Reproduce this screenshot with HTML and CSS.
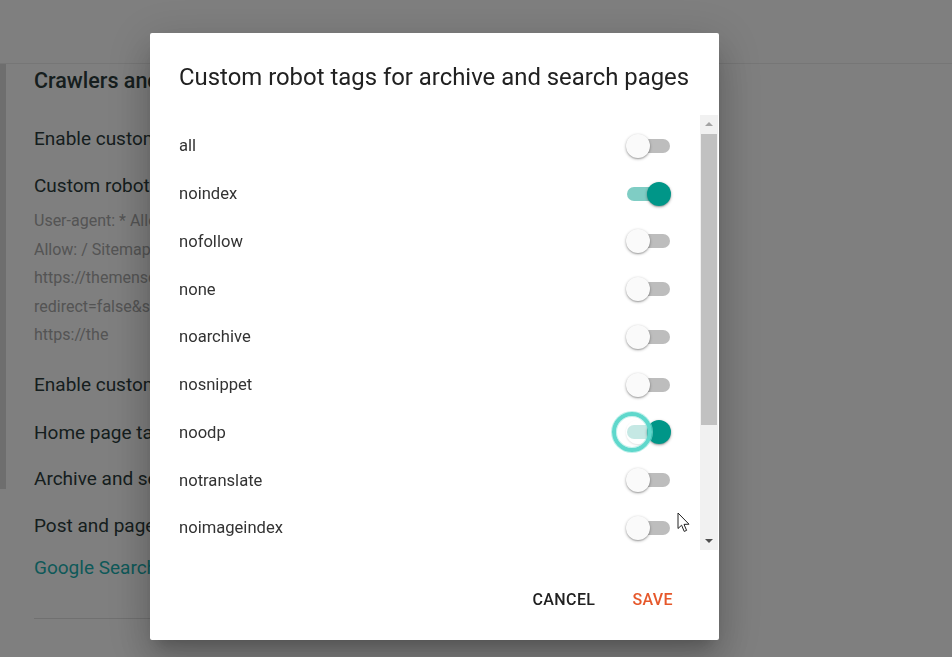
FILE: index.html
```html
<!DOCTYPE html>
<html lang="en">
<head>
<meta charset="utf-8">
<title>Custom robot tags</title>
<link rel="stylesheet" href="styles.css">
</head>
<body>
<div class="page">
  <header class="topbar"></header>
  <div class="main">
    <div class="strip"></div>
    <section class="settings">
      <h2 class="settings-title">Crawlers and indexing</h2>
      <div class="setting s1">Enable custom robots.txt</div>
      <div class="setting s2">Custom robots.txt</div>
      <div class="robots">
        <div>User-agent: * Allow: /search Disallow:</div>
        <div>Allow: / Sitemap: https://themensday.com</div>
        <div>https://themensday.com/sitemap.xml?</div>
        <div>redirect=false&amp;sitemap=pages.xml</div>
        <div>https://the</div>
      </div>
      <div class="setting s3">Enable custom robots header tags</div>
      <div class="setting s4">Home page tags</div>
      <div class="setting s5">Archive and search page tags</div>
      <div class="setting s6">Post and page tags</div>
      <div class="setting link">Google Search Console</div>
      <div class="rule"></div>
    </section>
  </div>
</div>

<div class="scrim"></div>

<div class="dialog">
  <h1 class="dialog-title">Custom robot tags for archive and search pages</h1>
  <div class="body">
    <ul class="list">
      <li class="row"><span class="label">all</span><span class="toggle"><span class="track"></span><span class="thumb"></span></span></li>
      <li class="row"><span class="label">noindex</span><span class="toggle on"><span class="track"></span><span class="thumb"></span></span></li>
      <li class="row"><span class="label">nofollow</span><span class="toggle"><span class="track"></span><span class="thumb"></span></span></li>
      <li class="row"><span class="label">none</span><span class="toggle"><span class="track"></span><span class="thumb"></span></span></li>
      <li class="row"><span class="label">noarchive</span><span class="toggle"><span class="track"></span><span class="thumb"></span></span></li>
      <li class="row"><span class="label">nosnippet</span><span class="toggle"><span class="track"></span><span class="thumb"></span></span></li>
      <li class="row"><span class="label">noodp</span><span class="toggle on focus"><span class="track"></span><span class="ghost"></span><span class="thumb"></span><span class="ring"></span></span></li>
      <li class="row"><span class="label">notranslate</span><span class="toggle"><span class="track"></span><span class="thumb"></span></span></li>
      <li class="row"><span class="label">noimageindex</span><span class="toggle"><span class="track"></span><span class="thumb"></span></span></li>
    </ul>
    <div class="scrollbar">
      <div class="arrow up"></div>
      <div class="sb-track"><div class="sb-thumb"></div></div>
      <div class="arrow down"></div>
    </div>
  </div>
  <div class="actions">
    <button class="btn cancel">Cancel</button>
    <button class="btn save">Save</button>
  </div>
</div>

<svg class="cursor" width="14" height="22" viewBox="0 0 14 22">
  <path d="M1 1 L1 16.5 L4.6 13.2 L7.2 19.4 L9.6 18.4 L7 12.4 L12 12.2 Z" fill="#fff" stroke="#222" stroke-width="1" stroke-linejoin="round"/>
</svg>
</body>
</html>
```

FILE: styles.css
```css
* { box-sizing: border-box; }
html, body {
  margin: 0;
  padding: 0;
  width: 952px;
  height: 657px;
  overflow: hidden;
  background: #ffffff;
  font-family: Roboto, "Liberation Sans", Arial, sans-serif;
}

/* ---------- background page ---------- */
.page { width: 952px; height: 657px; }
.topbar {
  height: 64px;
  border-bottom: 1px solid #ececec;
}
.main { display: flex; }
.strip {
  width: 6px;
  height: 425px;
  background: #dcdcdc;
  flex: none;
}
.settings {
  margin-left: 28px;
  width: 116px;
  overflow: hidden;
  color: #2c3c3c;
  white-space: nowrap;
}
.settings-title {
  margin: 3px 0 0;
  font-size: 21.5px;
  line-height: 28px;
  font-weight: 500;
}
.setting {
  font-size: 19px;
  line-height: 24px;
}
.s1 { margin-top: 32px; }
.s2 { margin-top: 23px; }
.robots {
  margin-top: 9px;
  font-size: 16px;
  line-height: 28.5px;
  color: #a8a8a8;
}
.s3 { margin-top: 23px; }
.s4 { margin-top: 24px; }
.s5 { margin-top: 22px; }
.s6 { margin-top: 23px; }
.link { margin-top: 18px; color: #1cb2b2; }
.rule {
  margin-top: 38px;
  height: 1px;
  width: 116px;
  background: #e0e0e0;
}

.scrim {
  position: fixed;
  inset: 0;
  background: rgba(0, 0, 0, 0.5);
}

/* ---------- dialog ---------- */
.dialog {
  position: fixed;
  left: 150px;
  top: 33px;
  width: 569px;
  height: 607px;
  background: #ffffff;
  border-radius: 2px;
  box-shadow: 0 11px 15px -7px rgba(0,0,0,.2), 0 24px 38px 3px rgba(0,0,0,.14), 0 9px 46px 8px rgba(0,0,0,.12);
  display: flex;
  flex-direction: column;
}
.dialog-title {
  margin: 0;
  padding: 29px 0 0 29px;
  font-size: 23.9px;
  line-height: 30px;
  font-weight: 400;
  color: #212121;
  height: 82px;
  white-space: nowrap;
}
.body {
  display: flex;
  height: 435px;
  padding-left: 29px;
  padding-right: 1px;
}
.list {
  list-style: none;
  margin: 0;
  padding: 7px 30px 0 0;
  flex: 1;
}
.row {
  height: 47.75px;
  display: flex;
  align-items: center;
  justify-content: space-between;
}
.label {
  font-size: 16.6px;
  color: #333333;
}
.toggle {
  position: relative;
  width: 43px;
  height: 24px;
  flex: none;
}
.track {
  position: absolute;
  left: 0;
  top: 5px;
  width: 43px;
  height: 14px;
  border-radius: 7px;
  background: #bdbdbd;
}
.thumb {
  position: absolute;
  left: -1px;
  top: 0;
  width: 24px;
  height: 24px;
  border-radius: 50%;
  background: #fafafa;
  box-shadow: 0 1px 3px rgba(0,0,0,.35), 0 1px 1px rgba(0,0,0,.12);
}
.toggle.on .track { background: #7fcdc4; }
.toggle.on .thumb { left: 20px; background: #009688; }
.ghost {
  position: absolute;
  left: -1px;
  top: 0;
  width: 24px;
  height: 24px;
  border-radius: 50%;
  background: rgba(255,255,255,.55);
  box-shadow: 0 1px 2px rgba(0,0,0,.12);
}
.ring {
  position: absolute;
  left: -15px;
  top: -8px;
  width: 40px;
  height: 40px;
  border-radius: 50%;
  border: 4px solid #5fd8cc;
  box-shadow: 0 0 0 1px rgba(150, 230, 222, .6), inset 0 0 0 1px rgba(150, 230, 222, .5);
}

.scrollbar {
  width: 18px;
  flex: none;
  background: #f1f1f1;
  display: flex;
  flex-direction: column;
  align-items: center;
}
.arrow {
  height: 18px;
  width: 18px;
  display: flex;
  align-items: center;
  justify-content: center;
}
.arrow::before {
  content: "";
  border-left: 4px solid transparent;
  border-right: 4px solid transparent;
}
.arrow.up::before { border-bottom: 4px solid #a3a3a3; }
.arrow.down::before { border-top: 4px solid #505050; }
.sb-track { flex: 1; width: 18px; padding: 1px 1px 0 1px; }
.sb-thumb {
  height: 291px;
  background: #c1c1c1;
}

.actions {
  display: flex;
  justify-content: flex-end;
  padding: 31px 32px 0 0;
  gap: 9px;
}
.btn {
  height: 36px;
  padding: 0 14px;
  border: 0;
  background: transparent;
  font-family: Roboto, "Liberation Sans", Arial, sans-serif;
  font-size: 16px;
  font-weight: 500;
  text-transform: uppercase;
  letter-spacing: 0.4px;
}
.cancel { color: #212121; }
.save { color: #e6582b; }

.cursor {
  position: fixed;
  left: 677px;
  top: 512px;
}
```
